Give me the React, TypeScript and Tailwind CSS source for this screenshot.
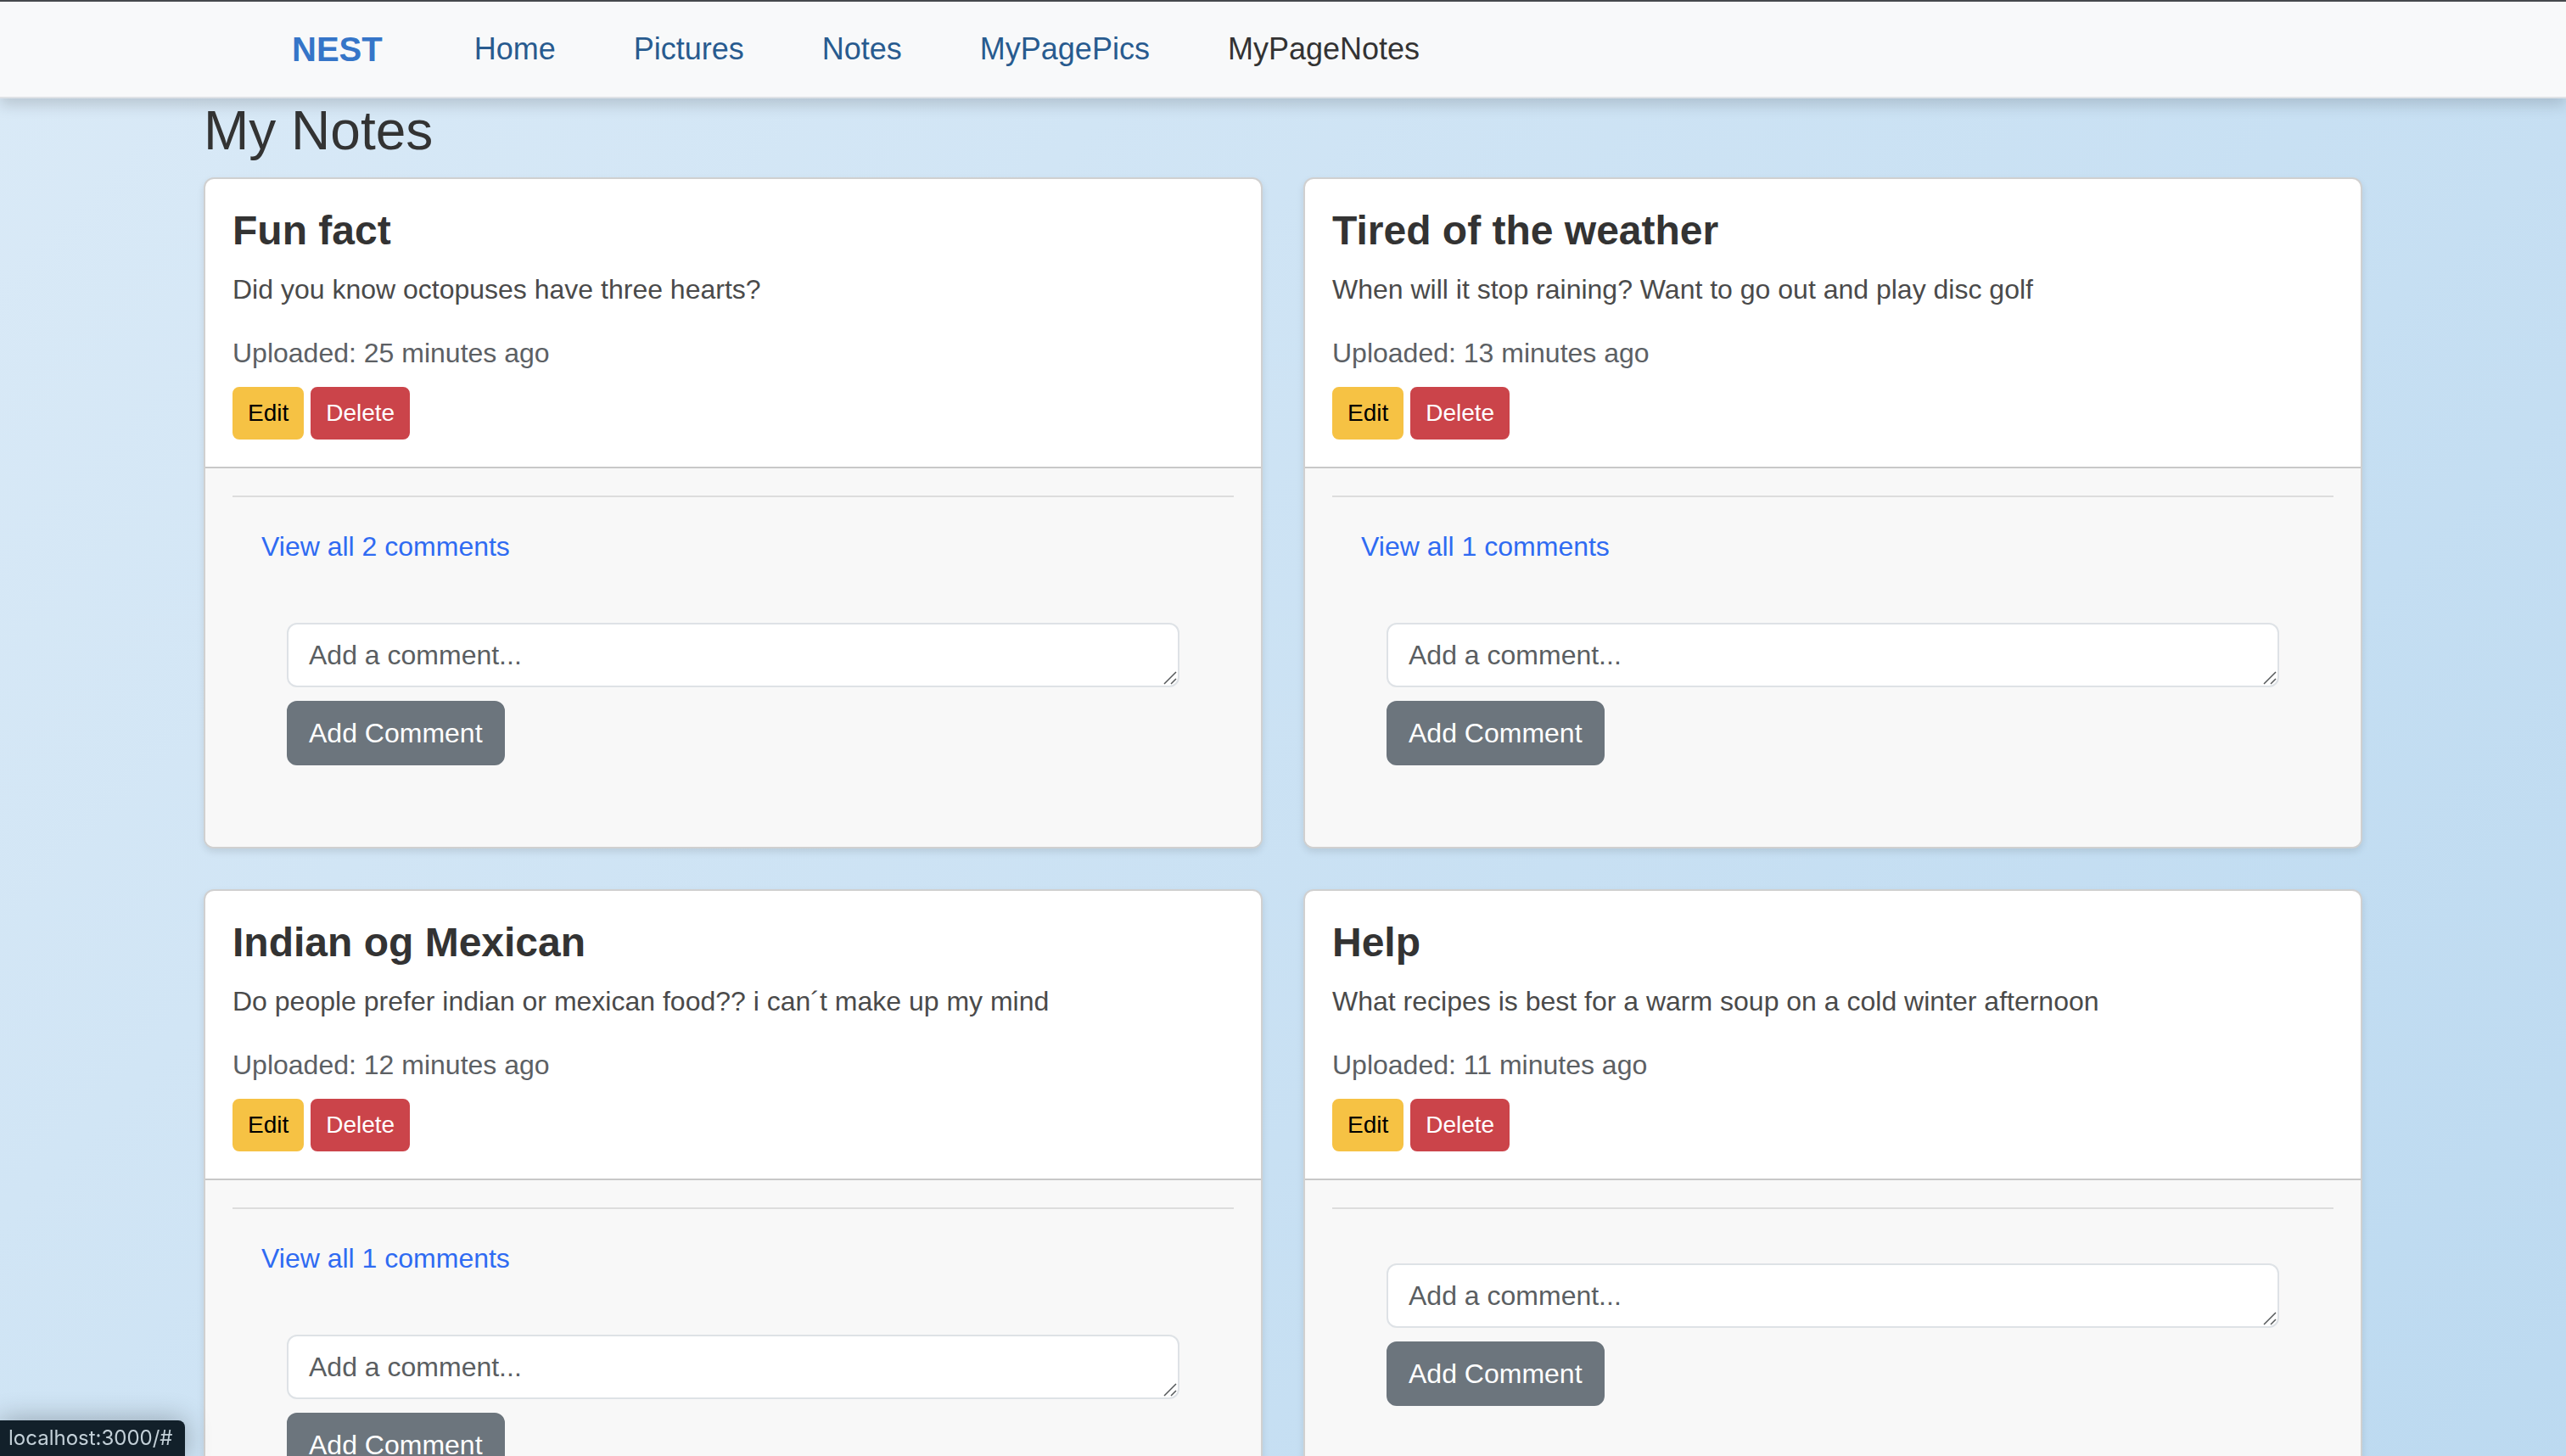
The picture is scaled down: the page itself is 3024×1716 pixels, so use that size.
type Note = { title: string; text: string; uploaded: string; comments: number };

const navLinks = [
  { label: "Home", active: false },
  { label: "Pictures", active: false },
  { label: "Notes", active: false },
  { label: "MyPagePics", active: false },
  { label: "MyPageNotes", active: true },
];

const notes: Note[] = [
  {
    title: "Fun fact",
    text: "Did you know octopuses have three hearts?",
    uploaded: "25 minutes ago",
    comments: 2,
  },
  {
    title: "Tired of the weather",
    text: "When will it stop raining? Want to go out and play disc golf",
    uploaded: "13 minutes ago",
    comments: 1,
  },
  {
    title: "Indian og Mexican",
    text: "Do people prefer indian or mexican food?? i can´t make up my mind",
    uploaded: "12 minutes ago",
    comments: 1,
  },
  {
    title: "Help",
    text: "What recipes is best for a warm soup on a cold winter afternoon",
    uploaded: "11 minutes ago",
    comments: 0,
  },
];

function Navbar() {
  return (
    <header className="relative border-t-2 border-b-2 border-t-[#45494d] border-b-[#dee2e6] bg-[#f8f9fa] shadow-[0_8px_16px_rgba(0,0,0,0.15)]">
      <nav className="mx-auto flex h-28 max-w-[2640px] items-center pl-[152px]">
        <a href="#" className="mr-[108px] text-[40px] leading-[60px] font-bold text-[#3575c8]">
          NEST
        </a>
        <ul className="flex items-center gap-[92px]">
          {navLinks.map((link) => (
            <li key={link.label}>
              <a
                href="#"
                aria-current={link.active ? "page" : undefined}
                className={`text-4xl leading-[54px] ${link.active ? "text-[#333333]" : "text-[#285b8f]"}`}
              >
                {link.label}
              </a>
            </li>
          ))}
        </ul>
      </nav>
    </header>
  );
}

function CommentForm({ id }: { id: string }) {
  return (
    <form className="flex flex-col items-start gap-4 p-16" onSubmit={(e) => e.preventDefault()}>
      <div className="relative w-full">
        <textarea
          id={id}
          rows={1}
          aria-label="Add a comment"
          placeholder="Add a comment..."
          className="block h-[76px] w-full resize-none overflow-hidden rounded-xl border-2 border-[#dee2e6] bg-white px-6 py-3 text-[32px] leading-[48px] text-[#212529] placeholder:text-[#5a5e61]"
        />
        <svg
          aria-hidden="true"
          viewBox="0 0 16 16"
          className="pointer-events-none absolute right-[3px] bottom-[3px] size-4"
          stroke="#55585a"
          strokeWidth="1.5"
          fill="none"
        >
          <path d="M1 15 15 1M9 15l6-6" />
        </svg>
      </div>
      <button
        type="submit"
        className="rounded-xl border-2 border-[#6c757d] bg-[#6c757d] px-6 py-3 text-[32px] leading-[48px] text-white"
      >
        Add Comment
      </button>
    </form>
  );
}

function NoteCard({ note, id }: { note: Note; id: string }) {
  return (
    <article className="flex flex-col overflow-hidden rounded-xl border-2 border-[#d0d0d0] bg-white shadow-[0_4px_8px_rgba(0,0,0,0.1)]">
      <div className="p-8">
        <h2 className="mb-4 text-5xl leading-[58px] font-bold text-[#333333]">{note.title}</h2>
        <p className="mb-[27px] text-[32px] leading-[48px] text-[#4a4a4a]">{note.text}</p>
        <p className="mb-4 text-[32px] leading-[48px] text-[#5c6064]">Uploaded: {note.uploaded}</p>
        <div className="flex gap-2">
          <button
            type="button"
            className="rounded-lg border-2 border-[#f6c244] bg-[#f6c244] px-4 py-2 text-[28px] leading-[42px] text-black"
          >
            Edit
          </button>
          <button
            type="button"
            className="rounded-lg border-2 border-[#cb444a] bg-[#cb444a] px-4 py-2 text-[28px] leading-[42px] text-white"
          >
            Delete
          </button>
        </div>
      </div>
      <div className="grow border-t-2 border-[#c8c8c8] bg-[#f8f8f8] p-8">
        <hr className="border-t-2 border-[#dddddd]" />
        {note.comments > 0 && (
          <a href="#" className="mt-[34px] mb-0.5 ml-[34px] block w-fit text-[32px] leading-[48px] text-[#2f6bf2]">
            View all {note.comments} comments
          </a>
        )}
        <CommentForm id={id} />
      </div>
    </article>
  );
}

export default function App() {
  return (
    <div className="min-h-screen bg-linear-135 from-[#daeaf7] to-[#bbd9f0] font-['Liberation_Sans',Arial,sans-serif]">
      <Navbar />
      <main className="mx-auto max-w-[2640px] px-12 pb-12">
        <h1 className="mb-4 text-[64px] leading-[77px] text-[#333333]">My Notes</h1>
        <section className="grid grid-cols-2 gap-12">
          {notes.map((note, i) => (
            <NoteCard key={note.title} note={note} id={`comment-${i}`} />
          ))}
        </section>
      </main>
      <div className="fixed bottom-0 left-0 h-[42px] rounded-tr-lg bg-[#12202a] pr-[14px] pl-[10px] font-['Inter',sans-serif] text-2xl leading-[42px] text-[#c3d0d8] shadow-[0_0_32px_rgba(0,0,0,0.3)]">
        localhost:3000/#
      </div>
    </div>
  );
}
